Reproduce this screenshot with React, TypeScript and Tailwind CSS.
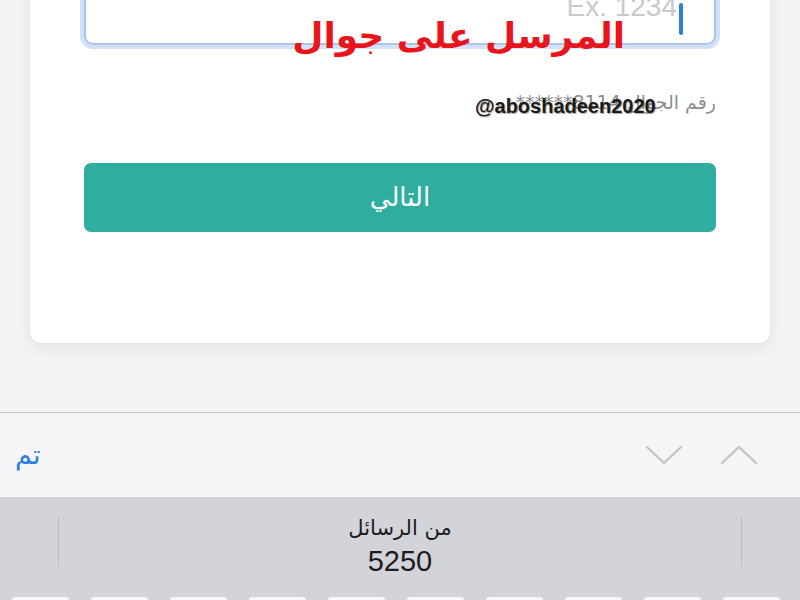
const arabic = { fontFamily: '"DejaVu Sans", "Noto Sans", sans-serif' };
const latin = { fontFamily: '"Liberation Sans", Arial, sans-serif' };

function Chevron({ up }: { up?: boolean }) {
  return (
    <svg width="38" height="22" viewBox="0 0 38 22" fill="none">
      <polyline
        points={up ? "2,19 19,3 36,19" : "2,3 19,19 36,3"}
        stroke="#c3c3c7"
        strokeWidth="2.4"
        strokeLinecap="round"
        strokeLinejoin="round"
      />
    </svg>
  );
}

function Keyboard() {
  const keys = Array.from({ length: 10 }, (_, index) => index);
  return (
    <div className="flex h-[103px] flex-col bg-[#d2d4d9]">
      <div className="flex h-[100px] shrink-0 items-start justify-between px-[58px] pt-[20px]">
        <div className="h-[49px] w-px bg-[#b9bbc0]" />
        <div className="-mt-[4px] flex flex-col items-center text-[#1c1c1e]">
          <span className="text-[21px] leading-[30px]" style={arabic} dir="rtl">
            من الرسائل
          </span>
          <span className="text-[29px] leading-[36px]" style={latin}>
            5250
          </span>
        </div>
        <div className="h-[49px] w-px bg-[#b9bbc0]" />
      </div>
      <div className="flex gap-[22px] px-[12px]">
        {keys.map((key) => (
          <div key={key} className="h-[3px] w-[57px] rounded-t-[4px] bg-[#f8f8f9]" />
        ))}
      </div>
    </div>
  );
}

export default function App() {
  return (
    <div className="flex h-[600px] w-[800px] flex-col overflow-hidden bg-[#f3f3f5]">
      <div className="h-[412px] px-[30px]">
        <div className="relative -mt-[40px] h-[383px] rounded-b-[12px] bg-white px-[54px] pt-[14px] shadow-[0_4px_14px_rgba(0,0,0,0.08)]">
          <div className="relative flex h-[71px] items-center justify-end rounded-[9px] border-[2px] border-[#a9c5ee] pr-[37px] ring-[4px] ring-[#d3e2f7]">
            <span className="-mt-[6px] text-[28px] text-[#c8c9ce]" style={latin}>
              Ex. 1234
            </span>
            <div className="absolute right-[31px] top-[27px] h-[32px] w-[4px] rounded-full bg-[#2c7be5]" />
          </div>
          <p dir="rtl" className="mt-[43px] text-[19px] text-[#8e8e93]" style={arabic}>
            رقم الجوال <span dir="ltr">******8114</span>
          </p>
          <div
            className="mt-[46px] flex h-[69px] items-center justify-center rounded-[7px] bg-[#2fae9f] text-[26px] text-white"
            style={arabic}
          >
            التالي
          </div>
          <span
            className="absolute left-[445px] top-[131px] text-[20px] font-bold text-[#1b1b1b] [text-shadow:1px_1px_1px_rgba(0,0,0,0.35)]"
            style={latin}
          >
            @aboshadeen2020
          </span>
          <span
            dir="rtl"
            className="absolute right-[145px] top-[58px] text-[36px] font-bold leading-none text-[#e8161c]"
            style={arabic}
          >
            المرسل على جوال
          </span>
        </div>
      </div>
      <div className="flex h-[85px] shrink-0 items-center justify-between border-t border-[#c6c6ca] bg-[#f5f5f7] pl-[15px] pr-[42px]">
        <span className="text-[27px] text-[#2a7de1]" style={arabic}>
          تم
        </span>
        <div className="flex items-center gap-[37px]">
          <Chevron />
          <Chevron up />
        </div>
      </div>
      <Keyboard />
    </div>
  );
}
